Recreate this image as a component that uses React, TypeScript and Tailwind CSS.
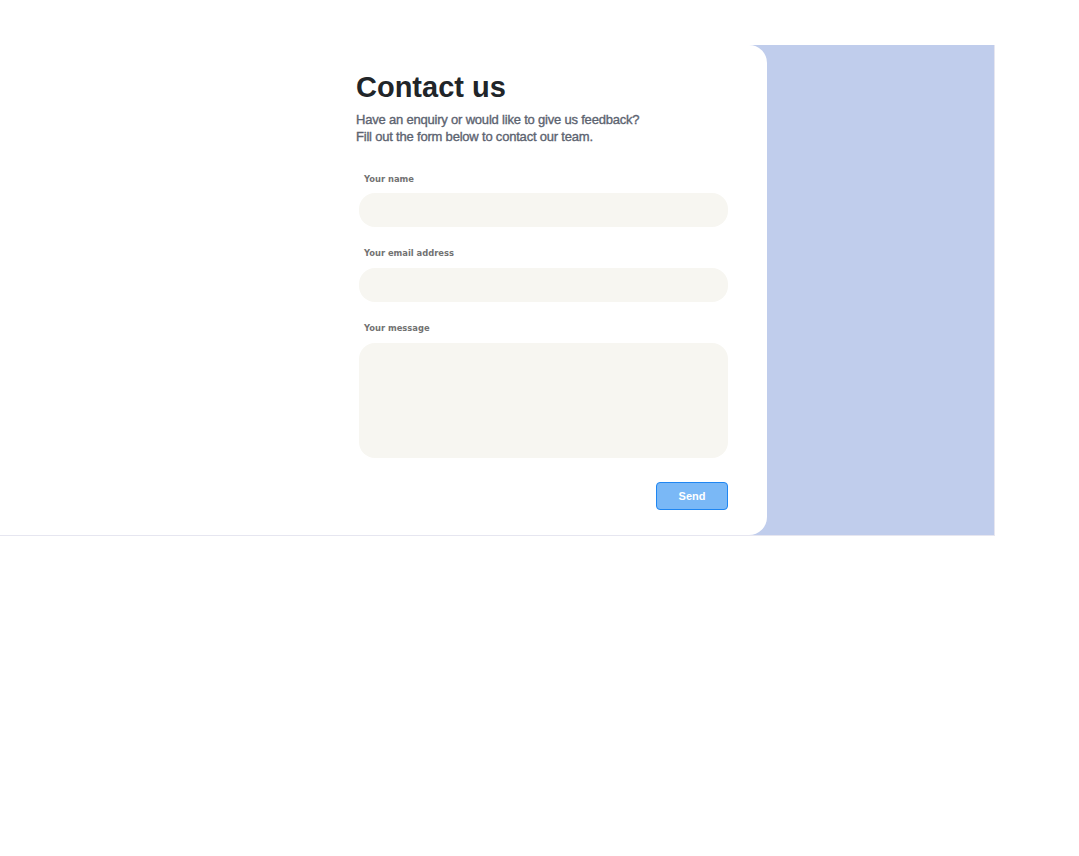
const labelFont = { fontFamily: '"DejaVu Sans Condensed", "DejaVu Sans", Verdana, sans-serif' };

export default function App() {
  return (
    <div className="w-full min-h-screen bg-white pt-[45px]" style={{ fontFamily: '"Liberation Sans", Arial, sans-serif' }}>
      <div className="w-[995px] h-[491px] bg-[#c0cdec] border-r border-b border-[#e6e6f0] flex">
        {/* Form card */}
        <div className="w-[767px] h-full bg-white rounded-r-[18px] pl-[356px] pr-[39px] pt-[24px]">
          <h1 className="text-[29px] leading-[36px] font-bold text-[#212529]">Contact us</h1>
          <p className="mt-[6px] text-[13px] leading-[17px] tracking-[-0.2px] text-[#5c6370] [-webkit-text-stroke:0.35px_#5c6370]">
            Have an enquiry or would like to give us feedback?
            <br />
            Fill out the form below to contact our team.
          </p>

          <form className="mt-[28px] pl-[3px] flex flex-col">
            <label className="pl-[5px] text-[9.3px] leading-[12px] font-bold text-[#727272]" style={labelFont}>
              Your name
            </label>
            <input className="mt-[8px] h-[34px] w-[369px] rounded-2xl bg-[#f7f6f1] outline-none" />

            <label className="mt-[20px] pl-[5px] text-[9.3px] leading-[12px] font-bold text-[#727272]" style={labelFont}>
              Your email address
            </label>
            <input className="mt-[9px] h-[34px] w-[369px] rounded-2xl bg-[#f7f6f1] outline-none" />

            <label className="mt-[20px] pl-[5px] text-[9.3px] leading-[12px] font-bold text-[#727272]" style={labelFont}>
              Your message
            </label>
            <textarea className="mt-[9px] h-[115px] w-[369px] rounded-2xl bg-[#f7f6f1] outline-none resize-none" />

            <div className="w-[369px] flex justify-end mt-[24px]">
              <button
                type="button"
                className="w-[72px] h-[28px] rounded-[4px] bg-[#7ab8f6] border border-[#1f86f2] text-white text-[11px] font-bold"
              >
                Send
              </button>
            </div>
          </form>
        </div>
      </div>
    </div>
  );
}
